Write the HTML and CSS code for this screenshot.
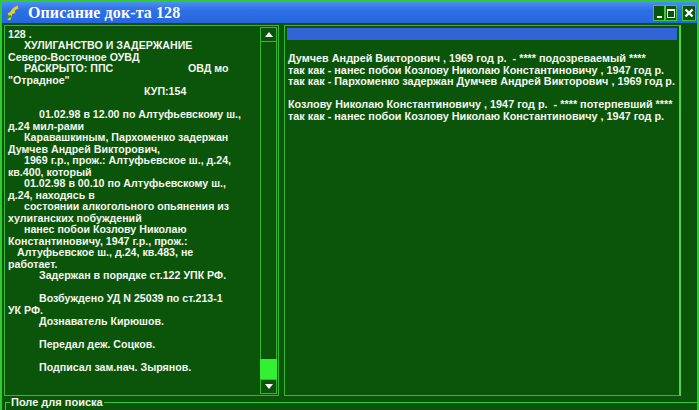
FILE: index.html
```html
<!DOCTYPE html>
<html lang="ru">
  <head>
    <meta charset="UTF-8" />
    <title>Описание док-та 128</title>
    <link rel="stylesheet" href="styles.css">
  </head>
  <body>
    <div class="window">
      <div class="titlebar">
        <svg class="app-icon" width="14" height="16" viewBox="0 0 14 16">
          <path d="M3 15 C4 9 6 4 12 2" stroke="#e8d020" stroke-width="3" fill="none"/>
          <path d="M2 9 L9 7" stroke="#e8d020" stroke-width="2"/>
          <path d="M1 13 L5 11" stroke="#2a9a2a" stroke-width="2"/>
        </svg>
        <span class="title">Описание док-та 128</span>
        <div class="controls">
          <div class="ctl"><span class="ctl-min"></span></div>
          <div class="ctl"><span class="ctl-max"></span></div>
          <div class="ctl ctl-close">
            <svg width="10" height="10" viewBox="0 0 10 10">
              <path d="M1.5 1.5 L8.5 8.5 M8.5 1.5 L1.5 8.5" stroke="#fff" stroke-width="2.4"/>
            </svg>
          </div>
        </div>
      </div>

      <div class="panels">
        <div class="memo">
          <div class="memo-text">
            <div>128 .</div>
            <div class="i1">ХУЛИГАНСТВО И ЗАДЕРЖАНИЕ</div>
            <div>Северо-Восточное ОУВД</div>
            <div class="i1"><span class="col">РАСКРЫТО: ППС</span>ОВД мо</div>
            <div>"Отрадное"</div>
            <div class="kup">КУП:154</div>
            <div>&nbsp;</div>
            <div class="i2">01.02.98 в 12.00 по Алтуфьевскому ш.,</div>
            <div>д.24 мил-рами</div>
            <div class="i1">Каравашкиным, Пархоменко задержан</div>
            <div>Думчев Андрей Викторович,</div>
            <div class="i1">1969 г.р., прож.: Алтуфьевское ш., д.24,</div>
            <div>кв.400, который</div>
            <div class="i1">01.02.98 в 00.10 по Алтуфьевскому ш.,</div>
            <div>д.24, находясь в</div>
            <div class="i1">состоянии алкогольного опьянения из</div>
            <div>хулиганских побуждений</div>
            <div class="i1">нанес побои Козлову Николаю</div>
            <div>Константиновичу, 1947 г.р., прож.:</div>
            <div class="i3">Алтуфьевское ш., д.24, кв.483, не</div>
            <div>работает.</div>
            <div class="i2">Задержан в порядке ст.122 УПК РФ.</div>
            <div>&nbsp;</div>
            <div class="i2">Возбуждено УД N 25039 по ст.213-1</div>
            <div>УК РФ.</div>
            <div class="i2">Дознаватель Кирюшов.</div>
            <div>&nbsp;</div>
            <div class="i2">Передал деж. Соцков.</div>
            <div>&nbsp;</div>
            <div class="i2">Подписал зам.нач. Зырянов.</div>
          </div>
          <div class="scrollbar">
            <div class="sb-btn">
              <svg width="8" height="5" viewBox="0 0 8 5"><path d="M0 5 L4 0 L8 5 Z" fill="#fff"/></svg>
            </div>
            <div class="sb-track"><div class="sb-thumb"></div></div>
            <div class="sb-btn">
              <svg width="8" height="5" viewBox="0 0 8 5"><path d="M0 0 L8 0 L4 5 Z" fill="#fff"/></svg>
            </div>
          </div>
        </div>

        <div class="list">
          <div class="list-head"></div>
          <div class="list-text">
            <div>Думчев Андрей Викторович , 1969 год р.&nbsp; - **** подозреваемый ****</div>
            <div>так как - нанес побои Козлову Николаю Константиновичу , 1947 год р.</div>
            <div>так как - Пархоменко задержан Думчев Андрей Викторович , 1969 год р.</div>
            <div>&nbsp;</div>
            <div>Козлову Николаю Константиновичу , 1947 год р.&nbsp; - **** потерпевший ****</div>
            <div>так как - нанес побои Козлову Николаю Константиновичу , 1947 год р.</div>
          </div>
        </div>
      </div>

      <fieldset class="search">
        <legend>Поле для поиска</legend>
      </fieldset>
    </div>
  </body>
</html>
```

FILE: styles.css
```css
body {
  margin: 0;
  background: #0a550a;
  font-family: "Liberation Sans", Arial, sans-serif;
  overflow: hidden;
}
.window {
  width: 699px;
  height: 410px;
  box-sizing: border-box;
  border: 2px solid #2ecc2e;
  border-bottom: none;
  background: #0a550a;
  overflow: hidden;
}
.titlebar {
  display: flex;
  align-items: center;
  height: 21px;
  padding: 0 1px 0 4px;
  background: linear-gradient(#4c8ef2, #2d70e6 40%, #2866de);
}
.app-icon {
  margin-right: 8px;
}
.title {
  font-family: "Liberation Serif", "Times New Roman", serif;
  font-weight: bold;
  font-size: 16px;
  color: #fff;
  letter-spacing: 0.1px;
}
.controls {
  display: flex;
  margin-left: auto;
  margin-top: 1px;
}
.ctl {
  width: 10px;
  height: 14px;
  border: 1px solid #3ad03a;
  background: #0a550a;
  display: flex;
  align-items: center;
  justify-content: center;
}
.ctl-close {
  margin-left: 5px;
  width: 12px;
}
.ctl-min {
  width: 5px;
  height: 2px;
  background: #fff;
  margin-top: 8px;
}
.ctl-max {
  width: 6px;
  height: 6px;
  border: 1px solid #fff;
  border-top-width: 2px;
}
.panels {
  display: flex;
  height: 371px;
  padding: 2px 0 0 2px;
  gap: 5px;
}
.memo {
  display: flex;
  width: 275px;
  box-sizing: border-box;
  border: 1px solid #34b834;
  padding: 1px;
}
.memo-text {
  flex: 1;
  padding: 2px 0 0 2px;
  color: #f6f6f0;
  font-size: 10.65px;
  font-weight: bold;
  line-height: 11.48px;
  white-space: nowrap;
  overflow: hidden;
}
.i1 { padding-left: 16px; }
.i2 { padding-left: 31px; }
.i3 { padding-left: 9px; }
.col {
  display: inline-block;
  width: 164px;
}
.kup { padding-left: 136px; }
.scrollbar {
  display: flex;
  flex-direction: column;
  width: 17px;
}
.sb-btn {
  height: 13px;
  border: 1px solid #34b834;
  display: flex;
  align-items: center;
  justify-content: center;
}
.sb-track {
  flex: 1;
  display: flex;
  flex-direction: column;
  justify-content: flex-end;
  border-left: 1px solid #34b834;
  border-right: 1px solid #34b834;
}
.sb-thumb {
  height: 20px;
  margin: 0 -1px;
  background: #33f033;
}
.list {
  width: 397px;
  box-sizing: border-box;
  border: 1px solid #34b834;
  border-right: 2px solid #4ad84a;
  padding: 2px 2px 0 2px;
}
.list-head {
  height: 12px;
  background: #3264d8;
}
.list-text {
  padding: 13px 0 0 1px;
  color: #f6f6f0;
  font-size: 10.85px;
  font-weight: bold;
  line-height: 11.5px;
  white-space: nowrap;
}
.search {
  margin: 0 -2px 0 3px;
  padding: 0;
  height: 30px;
  border: 1px solid #34c834;
  border-right: none;
}
.search legend {
  margin-left: 4px;
  padding: 0 1px;
  color: #f6f6f0;
  font-size: 11px;
  font-weight: bold;
  line-height: 12px;
}
```
